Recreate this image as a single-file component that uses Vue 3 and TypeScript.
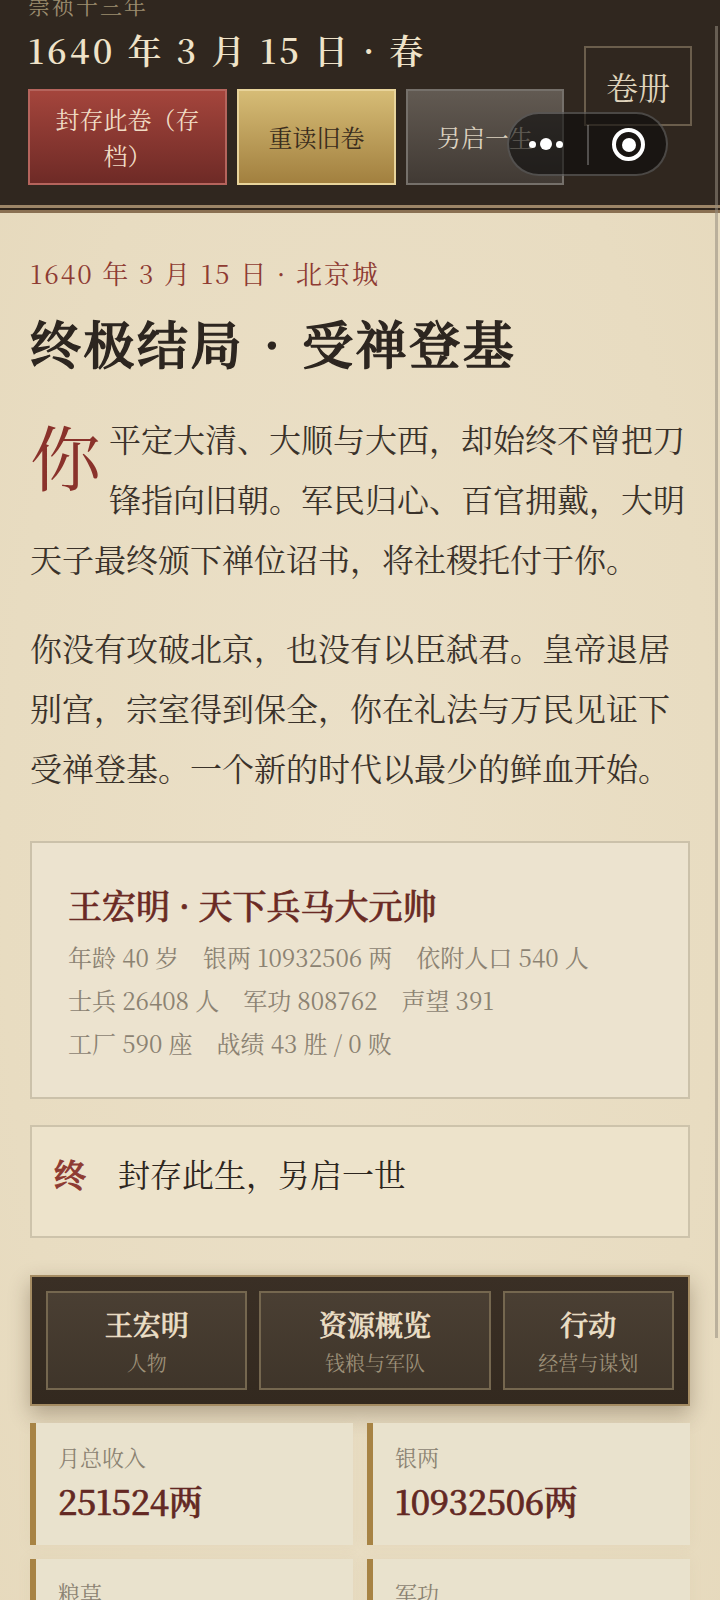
<script setup lang="ts">
const metaLines = [
  ['年龄 40 岁', '银两 10932506 两', '依附人口 540 人'],
  ['士兵 26408 人', '军功 808762', '声望 391'],
  ['工厂 590 座', '战绩 43 胜 / 0 败']
]

const tabs = [
  { title: '王宏明', sub: '人物', width: 202 },
  { title: '资源概览', sub: '钱粮与军队', width: 232 },
  { title: '行动', sub: '经营与谋划', width: 172 }
]

const stats = [
  { label: '月总收入', value: '251524两' },
  { label: '银两', value: '10932506两' },
  { label: '粮草', value: '86240石' },
  { label: '军功', value: '808762' }
]
</script>

<template>
  <div class="page">
    <header class="topbar">
      <div class="topbar-main">
        <div class="era">崇祯十三年</div>
        <div class="date">1640 年 3 月 15 日 · 春</div>
        <div class="actions">
          <button type="button" class="btn btn-red">封存此卷（存档）</button>
          <button type="button" class="btn btn-gold">重读旧卷</button>
          <button type="button" class="btn btn-grey">另启一生</button>
        </div>
      </div>
      <button type="button" class="volumes">卷册</button>
    </header>

    <main class="content">
      <div class="place">1640 年 3 月 15 日 · 北京城</div>
      <h1 class="headline">终极结局 · 受禅登基</h1>
      <p class="para"><span class="dropcap">你</span>平定大清、大顺与大西，却始终不曾把刀锋指向旧朝。军民归心、百官拥戴，大明天子最终颁下禅位诏书，将社稷托付于你。</p>
      <p class="para">你没有攻破北京，也没有以臣弑君。皇帝退居别宫，宗室得到保全，你在礼法与万民见证下受禅登基。一个新的时代以最少的鲜血开始。</p>

      <section class="hero-card">
        <div class="hero-name">王宏明 · 天下兵马大元帅</div>
        <div v-for="(line, i) in metaLines" :key="i" class="hero-meta">
          <span v-for="item in line" :key="item">{{ item }}</span>
        </div>
      </section>

      <section class="choice">
        <span class="choice-mark">终</span>
        <span class="choice-text">封存此生，另启一世</span>
      </section>

      <nav class="tabs">
        <div v-for="tab in tabs" :key="tab.title" class="tab" :style="{ width: tab.width + 'px' }">
          <div class="tab-title">{{ tab.title }}</div>
          <div class="tab-sub">{{ tab.sub }}</div>
        </div>
      </nav>

      <section class="stats">
        <div v-for="stat in stats" :key="stat.label" class="stat">
          <div class="stat-label">{{ stat.label }}</div>
          <div class="stat-value">{{ stat.value }}</div>
        </div>
      </section>
    </main>

    <!-- 小程序胶囊 -->
    <div class="capsule">
      <div class="capsule-dots"><i></i><b></b><i></i></div>
      <span class="capsule-line"></span>
      <div class="capsule-target"><span></span></div>
    </div>
    <div class="scrollbar"></div>
  </div>
</template>

<style>
body {
  margin: 0;
  background: #e8dcc1;
}
</style>

<style scoped>
.page {
  position: relative;
  width: 720px;
  height: 1600px;
  overflow: hidden;
  font-family: "Noto Serif CJK SC", "Liberation Serif", "Noto Sans CJK SC", serif;
  color: #2d2620;
  background: radial-gradient(ellipse at 50% 55%, #ebe0c8 0%, #e8dcc1 70%, #e6d9bc 100%);
}

.topbar {
  display: flex;
  gap: 20px;
  height: 208px;
  padding: 0 28px;
  box-sizing: border-box;
  background: #30271f;
  border-bottom: 3px solid #9c8567;
  box-shadow: 0 2px 0 #2e241b, 0 5px 0 #8a7052;
  margin-bottom: 5px;
}

.topbar-main {
  width: 536px;
  flex-shrink: 0;
}

.era {
  margin-top: -10px;
  height: 30px;
  font-size: 22px;
  line-height: 30px;
  letter-spacing: 2px;
  color: #9c8d70;
}

.date {
  margin-top: 8px;
  font-size: 34px;
  line-height: 44px;
  font-weight: 600;
  letter-spacing: 3.2px;
  color: #efe3c9;
}

.actions {
  display: grid;
  grid-template-columns: 199px 159px 158px;
  gap: 10px;
  margin-top: 17px;
}

.btn {
  height: 96px;
  padding: 0 20px;
  font-family: inherit;
  font-size: 24px;
  line-height: 36px;
  border: 2px solid;
  border-radius: 0;
}

.btn-red {
  color: #f0dcc4;
  background: linear-gradient(180deg, #a4453c, #6e2a26);
  border-color: #b5645c;
}

.btn-gold {
  color: #3a2c1c;
  background: linear-gradient(180deg, #d6bc76, #a2803f);
  border-color: #e8d49b;
}

.btn-grey {
  color: #dcd2c0;
  background: linear-gradient(180deg, #625a52, #413a34);
  border-color: #75706a;
}

.volumes {
  width: 108px;
  height: 80px;
  margin-top: 46px;
  padding: 0;
  font-family: inherit;
  font-size: 32px;
  color: #dfd3bb;
  background: transparent;
  border: 2px solid #6b5e4c;
  border-radius: 0;
}

.content {
  padding: 42px 30px 0;
}

.place {
  font-size: 26px;
  line-height: 36px;
  letter-spacing: 2px;
  color: #8e3b32;
}

.headline {
  margin: 16px 0 0;
  font-size: 51px;
  line-height: 70px;
  font-weight: 500;
  -webkit-text-stroke: 1.5px #2d2620;
  letter-spacing: 2.5px;
  word-spacing: 4px;
  color: #2d2620;
}

.para {
  margin: 31px 0 0;
  font-size: 32px;
  line-height: 60px;
  color: #3a322a;
}

.para + .para {
  margin-top: 29px;
}

.dropcap {
  float: left;
  width: 72px;
  margin: 8px 7px 0 0;
  font-size: 71px;
  line-height: 76px;
  color: #8a322b;
}

.hero-card {
  margin-top: 44px;
  padding: 40px 36px;
  height: 258px;
  box-sizing: border-box;
  background: #ece3cf;
  border: 2px solid #cbc1aa;
}

.hero-name {
  font-size: 34px;
  line-height: 44px;
  font-weight: 500;
  -webkit-text-stroke: 0.7px #6a2a24;
  color: #6a2a24;
  margin-bottom: 8px;
}

.hero-meta {
  display: flex;
  gap: 24px;
  font-size: 24px;
  line-height: 43px;
  color: #8b8272;
}

.choice {
  display: flex;
  gap: 32px;
  align-items: flex-start;
  height: 113px;
  margin-top: 26px;
  padding: 24px 22px;
  box-sizing: border-box;
  background: #ede3cb;
  border: 2px solid #cdc3ab;
}

.choice-mark {
  font-size: 32px;
  line-height: 44px;
  font-weight: 500;
  -webkit-text-stroke: 1px #8e3b32;
  color: #8e3b32;
}

.choice-text {
  font-size: 32px;
  line-height: 44px;
}

.tabs {
  display: flex;
  gap: 12px;
  margin-top: 37px;
  padding: 14px;
  background: linear-gradient(180deg, #3a2f25, #33291f);
  border: 2px solid #a58c63;
  box-shadow: 0 8px 20px rgba(60, 40, 20, 0.32);
}

.tab {
  height: 99px;
  box-sizing: border-box;
  text-align: center;
  padding-top: 9px;
  background: linear-gradient(180deg, #4a3f33, #3f352a);
  border: 2px solid #75674f;
}

.tab-title {
  font-size: 28px;
  line-height: 45px;
  font-weight: 500;
  -webkit-text-stroke: 0.7px #ebdfc6;
  color: #ebdfc6;
}

.tab-sub {
  font-size: 20px;
  line-height: 32px;
  color: #9d9078;
}

.stats {
  display: grid;
  grid-template-columns: 1fr 1fr;
  gap: 14px 14px;
  margin-top: 17px;
}

.stat {
  height: 122px;
  box-sizing: border-box;
  padding: 18px 22px;
  background: #e9e2cd;
  border-left: 6px solid #a78344;
  box-shadow: 0 0 12px rgba(190, 170, 130, 0.12);
}

.stat-label {
  font-size: 22px;
  line-height: 32px;
  color: #8b8272;
}

.stat-value {
  margin-top: 5px;
  font-size: 34px;
  line-height: 46px;
  font-weight: 500;
  -webkit-text-stroke: 0.7px #632823;
  letter-spacing: -0.3px;
  color: #632823;
}

.capsule {
  position: absolute;
  left: 507px;
  top: 112px;
  width: 161px;
  height: 64px;
  box-sizing: border-box;
  background: rgba(10, 10, 10, 0.6);
  border: 2px solid rgba(255, 255, 255, 0.22);
  border-radius: 32px;
}

.capsule-dots {
  position: absolute;
  left: 20px;
  top: 24px;
  display: flex;
  align-items: center;
  gap: 4px;
}

.capsule-dots i {
  width: 7px;
  height: 7px;
  border-radius: 50%;
  background: #fff;
}

.capsule-dots b {
  width: 12px;
  height: 12px;
  border-radius: 50%;
  background: #fff;
}

.capsule-line {
  position: absolute;
  left: 78px;
  top: 11px;
  width: 2px;
  height: 40px;
  background: rgba(255, 255, 255, 0.25);
}

.capsule-target {
  position: absolute;
  left: 103px;
  top: 14px;
  width: 33px;
  height: 33px;
  box-sizing: border-box;
  border: 4px solid #fff;
  border-radius: 50%;
  display: flex;
  align-items: center;
  justify-content: center;
}

.capsule-target span {
  width: 14px;
  height: 14px;
  border-radius: 50%;
  background: #fff;
}

.scrollbar {
  position: absolute;
  right: 2px;
  top: 26px;
  width: 3px;
  height: 1312px;
  background: rgba(150, 140, 125, 0.55);
}
</style>
